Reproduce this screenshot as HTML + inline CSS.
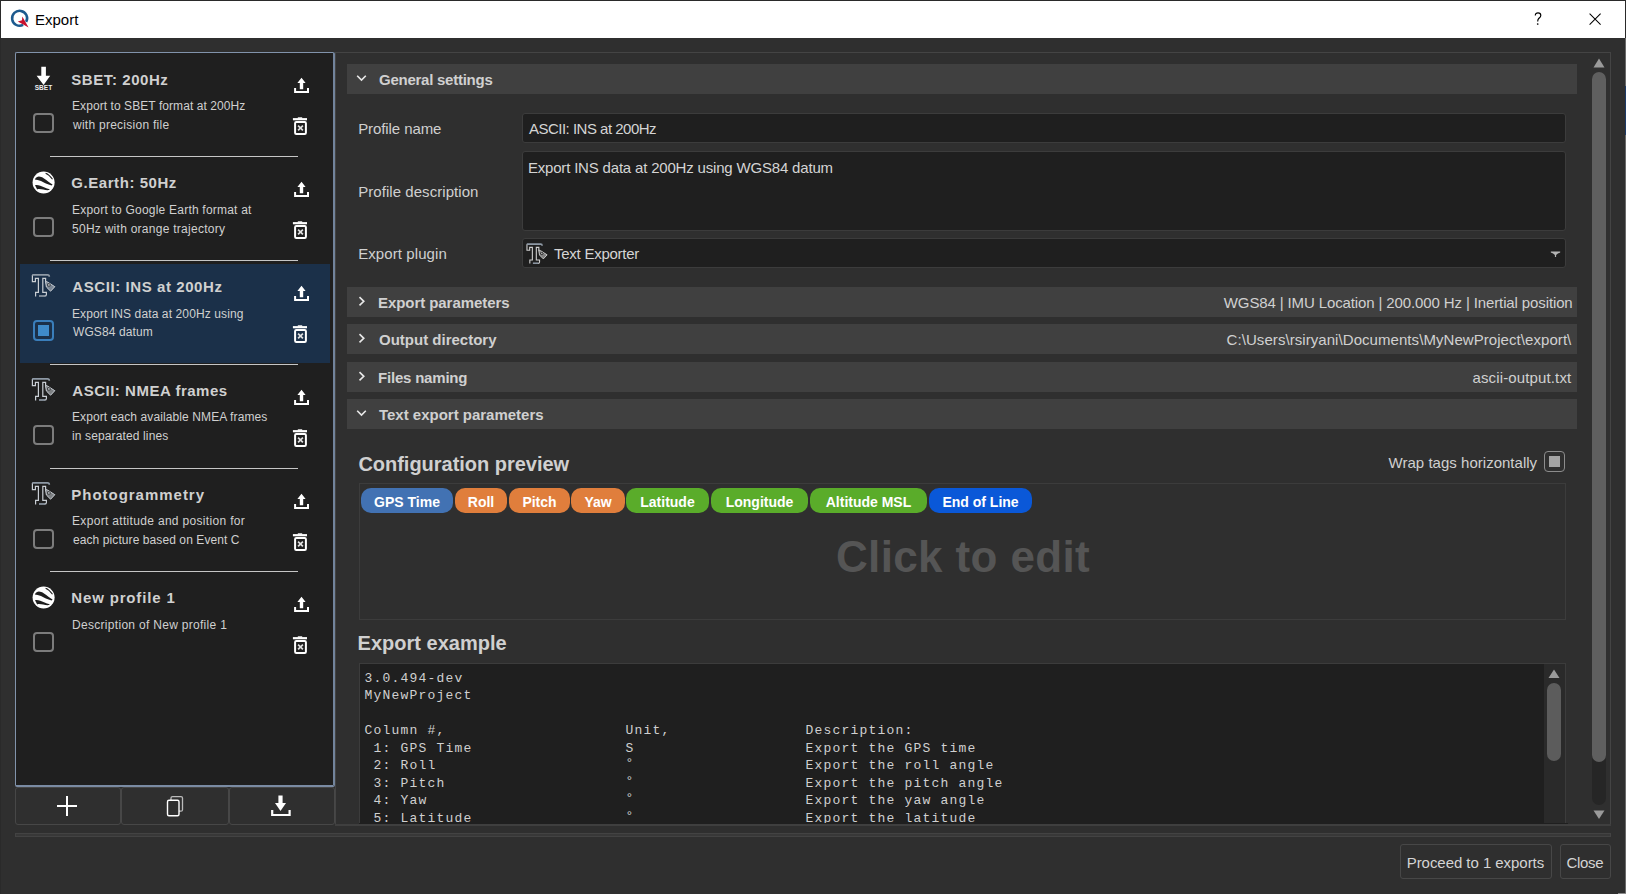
<!DOCTYPE html>
<html><head><meta charset="utf-8"><title>Export</title>
<style>
html,body{margin:0;padding:0;width:1626px;height:894px;overflow:hidden;background:#2f2f2f}
body>div{position:absolute}
</style></head><body>
<div style="left:0px;top:0px;width:1626px;height:894px;background:#2f2f2f"></div>
<div style="left:0px;top:0px;width:1626px;height:1px;background:#2a2a2a"></div>
<div style="left:0px;top:0px;width:1px;height:894px;background:#2a2a2a"></div>
<div style="left:1625px;top:0px;width:1px;height:894px;background:#2a2a2a"></div>
<div style="left:1625px;top:38px;width:1px;height:856px;background:#6a6a6a"></div>
<div style="left:1625px;top:86px;width:1px;height:49px;background:#1d3a66"></div>
<div style="left:1618px;top:893px;width:8px;height:1px;background:#8a8a8a"></div>
<div style="left:1px;top:1px;width:1624px;height:37px;background:#ffffff"></div>
<svg style="position:absolute;left:6px;top:4px" width="28" height="28" viewBox="0 0 28 28"><path d="M17.12,20.92 A7.5,7.5 0 1 1 20.16,17.94" fill="none" stroke="#1d5a8e" stroke-width="2.5"/><path d="M22.6,23.6 L16.3,12.4 L16,16.3 L11.8,17.4 Z" fill="#c8102e"/></svg>
<div style="left:35px;top:12px;font:normal 15px/15px 'Liberation Sans';color:#000000;white-space:pre">Export</div>
<svg style="position:absolute;left:1534px;top:12px" width="8" height="14" viewBox="0 0 8 14"><path d="M1.3,3.4 C1.3,1.8 2.5,0.9 4,0.9 C5.6,0.9 6.8,1.9 6.8,3.4 C6.8,5 5.6,5.6 4.7,6.5 C4,7.2 3.7,8 3.7,9.6" fill="none" stroke="#000" stroke-width="1.15"/><circle cx="3.7" cy="12" r="0.85" fill="#000"/></svg>
<svg style="position:absolute;left:1589px;top:13px" width="13" height="13" viewBox="0 0 13 13"><path d="M0.6,0.6 L11.6,11.6 M11.6,0.6 L0.6,11.6" stroke="#000" stroke-width="1.05"/></svg>
<div style="left:15px;top:52px;width:320px;height:735px;background:#1f1f1f;border:1px solid #8193ab;border-right:2px solid #72849c;border-bottom:2px solid #7a8ba3;box-sizing:border-box;border-radius:2px"></div>
<svg style="position:absolute;left:32px;top:66px" width="24" height="26" viewBox="0 0 24 26"><path d="M9.3,0.8 H13.9 V9.8 H18.2 L11.6,19 L4.6,9.8 H9.3 Z" fill="#fff"/><text x="11.5" y="24.3" text-anchor="middle" font-family="Liberation Sans" font-weight="bold" font-size="6.5" letter-spacing="0.05" fill="#eeeeee">SBET</text></svg>
<div style="left:71.3px;top:72px;font:bold 15px/15px 'Liberation Sans';color:#d0d0d0;letter-spacing:0.57px;white-space:pre">SBET: 200Hz</div>
<div style="left:72px;top:100px;font:normal 12px/12px 'Liberation Sans';color:#d0d0d0;letter-spacing:0.072px;white-space:pre">Export to SBET format at 200Hz</div>
<div style="left:73px;top:119px;font:normal 12px/12px 'Liberation Sans';color:#d0d0d0;letter-spacing:0.261px;white-space:pre">with precision file</div>
<div style="left:33px;top:113px;width:21px;height:20px;border:2px solid #7c7c7c;border-radius:4px;box-sizing:border-box"></div>
<svg style="position:absolute;left:293px;top:77px" width="17" height="18" viewBox="0 0 17 18"><path d="M8.5,0.8 L12.6,5.9 H10.2 V12.2 H6.8 V5.9 H4.4 Z" fill="#fff"/><path d="M2.1,11 V15.1 H15 V11" fill="none" stroke="#fff" stroke-width="2"/></svg>
<svg style="position:absolute;left:292px;top:117px" width="16" height="20" viewBox="0 0 16 20"><path d="M0.9,2.2 H15" stroke="#fff" stroke-width="2.2"/><path d="M5.8,1 H10.2" stroke="#fff" stroke-width="1.4"/><rect x="3.1" y="5" width="10.8" height="12" rx="1.2" fill="none" stroke="#fff" stroke-width="2"/><path d="M6.1,8.6 L10.9,13.4 M10.9,8.6 L6.1,13.4" stroke="#e0e0e0" stroke-width="1.7"/></svg>
<div style="left:50px;top:156px;width:248px;height:1px;background:#c6c6c6"></div>
<svg style="position:absolute;left:30px;top:169px" width="28" height="28" viewBox="0 0 28 28"><circle cx="13.6" cy="13.5" r="11" fill="#fff"/><path d="M4.8,10.4 C7,6.6 10,7 14,9.4 C17,11.4 20,13.8 22.6,15.4 L21.6,16.6 C17.5,15.6 14,13.6 11,12.1 C8.6,10.9 6.6,10.5 4.8,10.4 Z" fill="#1f1f1f"/><path d="M5,16.2 C8,15.6 11,16.9 14,18.3 C16,19.3 18,19.9 19.8,20.3 L19,21.1 C15.5,21.4 12,20.3 9,20.1 C7.6,20.1 7.2,20.6 7.2,20.6 Z" fill="#1f1f1f"/><path d="M15.6,4.3 C18,5.1 20.5,7.5 22.5,10.3" fill="none" stroke="#1f1f1f" stroke-width="1.1"/></svg>
<div style="left:71.3px;top:175px;font:bold 15px/15px 'Liberation Sans';color:#d0d0d0;letter-spacing:0.558px;white-space:pre">G.Earth: 50Hz</div>
<div style="left:72px;top:204px;font:normal 12px/12px 'Liberation Sans';color:#d0d0d0;letter-spacing:0.216px;white-space:pre">Export to Google Earth format at</div>
<div style="left:72px;top:223px;font:normal 12px/12px 'Liberation Sans';color:#d0d0d0;letter-spacing:0.265px;white-space:pre">50Hz with orange trajectory</div>
<div style="left:33px;top:217px;width:21px;height:20px;border:2px solid #7c7c7c;border-radius:4px;box-sizing:border-box"></div>
<svg style="position:absolute;left:293px;top:181px" width="17" height="18" viewBox="0 0 17 18"><path d="M8.5,0.8 L12.6,5.9 H10.2 V12.2 H6.8 V5.9 H4.4 Z" fill="#fff"/><path d="M2.1,11 V15.1 H15 V11" fill="none" stroke="#fff" stroke-width="2"/></svg>
<svg style="position:absolute;left:292px;top:221px" width="16" height="20" viewBox="0 0 16 20"><path d="M0.9,2.2 H15" stroke="#fff" stroke-width="2.2"/><path d="M5.8,1 H10.2" stroke="#fff" stroke-width="1.4"/><rect x="3.1" y="5" width="10.8" height="12" rx="1.2" fill="none" stroke="#fff" stroke-width="2"/><path d="M6.1,8.6 L10.9,13.4 M10.9,8.6 L6.1,13.4" stroke="#e0e0e0" stroke-width="1.7"/></svg>
<div style="left:50px;top:260px;width:248px;height:1px;background:#c6c6c6"></div>
<div style="left:20px;top:264px;width:310px;height:99px;background:#1b3049"></div>
<svg style="position:absolute;left:28px;top:268px" width="32" height="32" viewBox="0 0 32 32"><g transform="scale(1)" fill="none" stroke-width="1.2"><path d="M4.4,7 V13.6 H7.4 V10.4 H10.4 V24.4 H7.6 V28.4" stroke="#c9ced4"/><path d="M16.6,28.2 Q18.4,28.2 18.4,26.6 V24.4 H14.8 V10.4 H17.6 V13.5" stroke="#c9ced4"/><path d="M11,28 H17" stroke="#8e99a5" stroke-width="1.7"/><path d="M4.2,6.8 H19.6 Q21.3,6.8 21.3,8.7" stroke="#8e99a5" stroke-width="1.7"/><path d="M17.4,13.3 L19.6,14.1 L26.8,18.7 L22.6,23.2 L18.4,19 Z" fill="#c9ced4" fill-opacity="0.55" stroke="#c9ced4" stroke-width="1" stroke-linejoin="round"/><circle cx="20.9" cy="16.9" r="1.7" fill="#141414" fill-opacity="0.85" stroke="none"/><circle cx="20.9" cy="16.9" r="0.9" fill="#c9ced4" stroke="none"/></g></svg>
<div style="left:72.3px;top:279px;font:bold 15px/15px 'Liberation Sans';color:#d0d0d0;letter-spacing:0.578px;white-space:pre">ASCII: INS at 200Hz</div>
<div style="left:72px;top:308px;font:normal 12px/12px 'Liberation Sans';color:#d0d0d0;letter-spacing:0.114px;white-space:pre">Export INS data at 200Hz using</div>
<div style="left:73px;top:326px;font:normal 12px/12px 'Liberation Sans';color:#d0d0d0;letter-spacing:0.1px;white-space:pre">WGS84 datum</div>
<div style="left:33px;top:320px;width:21px;height:21px;border:2px solid #3a7ebb;border-radius:4px;box-sizing:border-box"></div>
<div style="left:38px;top:325px;width:11px;height:11px;background:#3f8bca"></div>
<svg style="position:absolute;left:293px;top:285px" width="17" height="18" viewBox="0 0 17 18"><path d="M8.5,0.8 L12.6,5.9 H10.2 V12.2 H6.8 V5.9 H4.4 Z" fill="#fff"/><path d="M2.1,11 V15.1 H15 V11" fill="none" stroke="#fff" stroke-width="2"/></svg>
<svg style="position:absolute;left:292px;top:325px" width="16" height="20" viewBox="0 0 16 20"><path d="M0.9,2.2 H15" stroke="#fff" stroke-width="2.2"/><path d="M5.8,1 H10.2" stroke="#fff" stroke-width="1.4"/><rect x="3.1" y="5" width="10.8" height="12" rx="1.2" fill="none" stroke="#fff" stroke-width="2"/><path d="M6.1,8.6 L10.9,13.4 M10.9,8.6 L6.1,13.4" stroke="#e0e0e0" stroke-width="1.7"/></svg>
<div style="left:50px;top:364px;width:248px;height:1px;background:#c6c6c6"></div>
<svg style="position:absolute;left:28px;top:372px" width="32" height="32" viewBox="0 0 32 32"><g transform="scale(1)" fill="none" stroke-width="1.2"><path d="M4.4,7 V13.6 H7.4 V10.4 H10.4 V24.4 H7.6 V28.4" stroke="#c9ced4"/><path d="M16.6,28.2 Q18.4,28.2 18.4,26.6 V24.4 H14.8 V10.4 H17.6 V13.5" stroke="#c9ced4"/><path d="M11,28 H17" stroke="#8e99a5" stroke-width="1.7"/><path d="M4.2,6.8 H19.6 Q21.3,6.8 21.3,8.7" stroke="#8e99a5" stroke-width="1.7"/><path d="M17.4,13.3 L19.6,14.1 L26.8,18.7 L22.6,23.2 L18.4,19 Z" fill="#c9ced4" fill-opacity="0.55" stroke="#c9ced4" stroke-width="1" stroke-linejoin="round"/><circle cx="20.9" cy="16.9" r="1.7" fill="#141414" fill-opacity="0.85" stroke="none"/><circle cx="20.9" cy="16.9" r="0.9" fill="#c9ced4" stroke="none"/></g></svg>
<div style="left:72.3px;top:383px;font:bold 15px/15px 'Liberation Sans';color:#d0d0d0;letter-spacing:0.512px;white-space:pre">ASCII: NMEA frames</div>
<div style="left:72px;top:411px;font:normal 12px/12px 'Liberation Sans';color:#d0d0d0;letter-spacing:0.1px;white-space:pre">Export each available NMEA frames</div>
<div style="left:72px;top:430px;font:normal 12px/12px 'Liberation Sans';color:#d0d0d0;letter-spacing:0.129px;white-space:pre">in separated lines</div>
<div style="left:33px;top:425px;width:21px;height:20px;border:2px solid #7c7c7c;border-radius:4px;box-sizing:border-box"></div>
<svg style="position:absolute;left:293px;top:389px" width="17" height="18" viewBox="0 0 17 18"><path d="M8.5,0.8 L12.6,5.9 H10.2 V12.2 H6.8 V5.9 H4.4 Z" fill="#fff"/><path d="M2.1,11 V15.1 H15 V11" fill="none" stroke="#fff" stroke-width="2"/></svg>
<svg style="position:absolute;left:292px;top:429px" width="16" height="20" viewBox="0 0 16 20"><path d="M0.9,2.2 H15" stroke="#fff" stroke-width="2.2"/><path d="M5.8,1 H10.2" stroke="#fff" stroke-width="1.4"/><rect x="3.1" y="5" width="10.8" height="12" rx="1.2" fill="none" stroke="#fff" stroke-width="2"/><path d="M6.1,8.6 L10.9,13.4 M10.9,8.6 L6.1,13.4" stroke="#e0e0e0" stroke-width="1.7"/></svg>
<div style="left:50px;top:468px;width:248px;height:1px;background:#c6c6c6"></div>
<svg style="position:absolute;left:28px;top:476px" width="32" height="32" viewBox="0 0 32 32"><g transform="scale(1)" fill="none" stroke-width="1.2"><path d="M4.4,7 V13.6 H7.4 V10.4 H10.4 V24.4 H7.6 V28.4" stroke="#c9ced4"/><path d="M16.6,28.2 Q18.4,28.2 18.4,26.6 V24.4 H14.8 V10.4 H17.6 V13.5" stroke="#c9ced4"/><path d="M11,28 H17" stroke="#8e99a5" stroke-width="1.7"/><path d="M4.2,6.8 H19.6 Q21.3,6.8 21.3,8.7" stroke="#8e99a5" stroke-width="1.7"/><path d="M17.4,13.3 L19.6,14.1 L26.8,18.7 L22.6,23.2 L18.4,19 Z" fill="#c9ced4" fill-opacity="0.55" stroke="#c9ced4" stroke-width="1" stroke-linejoin="round"/><circle cx="20.9" cy="16.9" r="1.7" fill="#141414" fill-opacity="0.85" stroke="none"/><circle cx="20.9" cy="16.9" r="0.9" fill="#c9ced4" stroke="none"/></g></svg>
<div style="left:71.3px;top:487px;font:bold 15px/15px 'Liberation Sans';color:#d0d0d0;letter-spacing:0.977px;white-space:pre">Photogrammetry</div>
<div style="left:72px;top:515px;font:normal 12px/12px 'Liberation Sans';color:#d0d0d0;letter-spacing:0.323px;white-space:pre">Export attitude and position for</div>
<div style="left:73px;top:534px;font:normal 12px/12px 'Liberation Sans';color:#d0d0d0;letter-spacing:0.086px;white-space:pre">each picture based on Event C</div>
<div style="left:33px;top:529px;width:21px;height:20px;border:2px solid #7c7c7c;border-radius:4px;box-sizing:border-box"></div>
<svg style="position:absolute;left:293px;top:493px" width="17" height="18" viewBox="0 0 17 18"><path d="M8.5,0.8 L12.6,5.9 H10.2 V12.2 H6.8 V5.9 H4.4 Z" fill="#fff"/><path d="M2.1,11 V15.1 H15 V11" fill="none" stroke="#fff" stroke-width="2"/></svg>
<svg style="position:absolute;left:292px;top:533px" width="16" height="20" viewBox="0 0 16 20"><path d="M0.9,2.2 H15" stroke="#fff" stroke-width="2.2"/><path d="M5.8,1 H10.2" stroke="#fff" stroke-width="1.4"/><rect x="3.1" y="5" width="10.8" height="12" rx="1.2" fill="none" stroke="#fff" stroke-width="2"/><path d="M6.1,8.6 L10.9,13.4 M10.9,8.6 L6.1,13.4" stroke="#e0e0e0" stroke-width="1.7"/></svg>
<div style="left:50px;top:571px;width:248px;height:1px;background:#c6c6c6"></div>
<svg style="position:absolute;left:30px;top:584px" width="28" height="28" viewBox="0 0 28 28"><circle cx="13.6" cy="13.5" r="11" fill="#fff"/><path d="M4.8,10.4 C7,6.6 10,7 14,9.4 C17,11.4 20,13.8 22.6,15.4 L21.6,16.6 C17.5,15.6 14,13.6 11,12.1 C8.6,10.9 6.6,10.5 4.8,10.4 Z" fill="#1f1f1f"/><path d="M5,16.2 C8,15.6 11,16.9 14,18.3 C16,19.3 18,19.9 19.8,20.3 L19,21.1 C15.5,21.4 12,20.3 9,20.1 C7.6,20.1 7.2,20.6 7.2,20.6 Z" fill="#1f1f1f"/><path d="M15.6,4.3 C18,5.1 20.5,7.5 22.5,10.3" fill="none" stroke="#1f1f1f" stroke-width="1.1"/></svg>
<div style="left:71.3px;top:590px;font:bold 15px/15px 'Liberation Sans';color:#d0d0d0;letter-spacing:0.842px;white-space:pre">New profile 1</div>
<div style="left:72px;top:619px;font:normal 12px/12px 'Liberation Sans';color:#d0d0d0;letter-spacing:0.3px;white-space:pre">Description of New profile 1</div>
<div style="left:33px;top:632px;width:21px;height:20px;border:2px solid #7c7c7c;border-radius:4px;box-sizing:border-box"></div>
<svg style="position:absolute;left:293px;top:596px" width="17" height="18" viewBox="0 0 17 18"><path d="M8.5,0.8 L12.6,5.9 H10.2 V12.2 H6.8 V5.9 H4.4 Z" fill="#fff"/><path d="M2.1,11 V15.1 H15 V11" fill="none" stroke="#fff" stroke-width="2"/></svg>
<svg style="position:absolute;left:292px;top:636px" width="16" height="20" viewBox="0 0 16 20"><path d="M0.9,2.2 H15" stroke="#fff" stroke-width="2.2"/><path d="M5.8,1 H10.2" stroke="#fff" stroke-width="1.4"/><rect x="3.1" y="5" width="10.8" height="12" rx="1.2" fill="none" stroke="#fff" stroke-width="2"/><path d="M6.1,8.6 L10.9,13.4 M10.9,8.6 L6.1,13.4" stroke="#e0e0e0" stroke-width="1.7"/></svg>
<div style="left:15px;top:787px;width:106px;height:38px;border:1px solid #474747;border-radius:3px;box-sizing:border-box"></div>
<div style="left:121px;top:787px;width:108px;height:38px;border:1px solid #474747;border-radius:3px;box-sizing:border-box"></div>
<div style="left:229px;top:787px;width:106px;height:38px;border:1px solid #474747;border-radius:3px;box-sizing:border-box"></div>
<svg style="position:absolute;left:56px;top:795px" width="22" height="22" viewBox="0 0 22 22"><path d="M11,1 V21 M1,11 H21" stroke="#fff" stroke-width="2"/></svg>
<svg style="position:absolute;left:165px;top:794px" width="20" height="24" viewBox="0 0 20 24"><rect x="6" y="2.6" width="11.5" height="14.6" rx="1.5" fill="none" stroke="#bbb" stroke-width="1.3"/><rect x="2.5" y="6.3" width="11.5" height="15.4" rx="1.5" fill="#2f2f2f" stroke="#fff" stroke-width="1.4"/></svg>
<svg style="position:absolute;left:270px;top:795px" width="22" height="22" viewBox="0 0 22 22"><path d="M8.4,0.6 H12.6 V8 H16 L10.5,16 L5,8 H8.4 Z" fill="#fff"/><path d="M2.2,15 V20 H19.6 V15" fill="none" stroke="#fff" stroke-width="2.2"/></svg>
<div style="left:335px;top:52px;width:1276px;height:773px;border:1px solid #444;box-sizing:border-box"></div>
<div style="left:347px;top:64px;width:1230px;height:30px;background:#404040"></div>
<svg style="position:absolute;left:355px;top:74px" width="12" height="8" viewBox="0 0 12 8"><path d="M2.2,1.8 L6.5,6.1 L10.8,1.8" fill="none" stroke="#e8e8e8" stroke-width="1.6"/></svg>
<div style="left:379px;top:72px;font:bold 15px/15px 'Liberation Sans';color:#d0d0d0;letter-spacing:-0.253px;white-space:pre">General settings</div>
<div style="left:358.2px;top:121px;font:normal 15px/15px 'Liberation Sans';color:#d0d0d0;letter-spacing:-0.091px;white-space:pre">Profile name</div>
<div style="left:358.2px;top:184px;font:normal 15px/15px 'Liberation Sans';color:#d0d0d0;letter-spacing:0.056px;white-space:pre">Profile description</div>
<div style="left:358.2px;top:246px;font:normal 15px/15px 'Liberation Sans';color:#d0d0d0;letter-spacing:0.083px;white-space:pre">Export plugin</div>
<div style="left:522px;top:113px;width:1044px;height:30px;background:#1f1f1f;border:1px solid #3c3c3c;border-radius:3px;box-sizing:border-box"></div>
<div style="left:528.9px;top:121px;font:normal 15px/15px 'Liberation Sans';color:#d4d4d4;letter-spacing:-0.5px;white-space:pre">ASCII: INS at 200Hz</div>
<div style="left:522px;top:151px;width:1044px;height:80px;background:#1f1f1f;border:1px solid #3c3c3c;border-radius:3px;box-sizing:border-box"></div>
<div style="left:527.9px;top:160px;font:normal 15px/15px 'Liberation Sans';color:#d4d4d4;letter-spacing:-0.183px;white-space:pre">Export INS data at 200Hz using WGS84 datum</div>
<div style="left:522px;top:238px;width:1044px;height:30px;background:#1f1f1f;border:1px solid #3c3c3c;border-radius:3px;box-sizing:border-box"></div>
<svg style="position:absolute;left:522.6px;top:237.8px" width="32" height="32" viewBox="0 0 32 32"><g transform="scale(0.9)" fill="none" stroke-width="1.2"><path d="M4.4,7 V13.6 H7.4 V10.4 H10.4 V24.4 H7.6 V28.4" stroke="#d0d0d0"/><path d="M16.6,28.2 Q18.4,28.2 18.4,26.6 V24.4 H14.8 V10.4 H17.6 V13.5" stroke="#d0d0d0"/><path d="M11,28 H17" stroke="#8e99a5" stroke-width="1.7"/><path d="M4.2,6.8 H19.6 Q21.3,6.8 21.3,8.7" stroke="#8e99a5" stroke-width="1.7"/><path d="M17.4,13.3 L19.6,14.1 L26.8,18.7 L22.6,23.2 L18.4,19 Z" fill="#d0d0d0" fill-opacity="0.55" stroke="#d0d0d0" stroke-width="1" stroke-linejoin="round"/><circle cx="20.9" cy="16.9" r="1.7" fill="#141414" fill-opacity="0.85" stroke="none"/><circle cx="20.9" cy="16.9" r="0.9" fill="#d0d0d0" stroke="none"/></g></svg>
<div style="left:554px;top:246px;font:normal 15px/15px 'Liberation Sans';color:#d4d4d4;letter-spacing:-0.25px;white-space:pre">Text Exporter</div>
<svg style="position:absolute;left:1550px;top:250.6px" width="12" height="8" viewBox="0 0 12 8"><path d="M0.8,0.6 H10.2 V1.6 Q7.6,2.3 6.1,3.9 V6.1 H4.9 V3.9 Q3.4,2.3 0.8,1.6 Z" fill="#b4b4b4"/></svg>
<div style="left:347px;top:287px;width:1230px;height:30px;background:#404040"></div>
<svg style="position:absolute;left:357px;top:295px" width="8" height="12" viewBox="0 0 8 12"><path d="M2.5,2.2 L6.8,6.3 L2.5,10.4" fill="none" stroke="#e8e8e8" stroke-width="1.6"/></svg>
<div style="left:378px;top:295px;font:bold 15px/15px 'Liberation Sans';color:#d0d0d0;letter-spacing:-0.062px;white-space:pre">Export parameters</div>
<div style="right:53.421px;top:295px;font:normal 15px/15px 'Liberation Sans';color:#d0d0d0;letter-spacing:-0.121px;white-space:pre">WGS84 | IMU Location | 200.000 Hz | Inertial position</div>
<div style="left:347px;top:324px;width:1230px;height:30px;background:#404040"></div>
<svg style="position:absolute;left:357px;top:332px" width="8" height="12" viewBox="0 0 8 12"><path d="M2.5,2.2 L6.8,6.3 L2.5,10.4" fill="none" stroke="#e8e8e8" stroke-width="1.6"/></svg>
<div style="left:379px;top:332px;font:bold 15px/15px 'Liberation Sans';color:#d0d0d0;white-space:pre">Output directory</div>
<div style="right:54.668px;top:332px;font:normal 15px/15px 'Liberation Sans';color:#d0d0d0;letter-spacing:0.062px;white-space:pre">C:\Users\rsiryani\Documents\MyNewProject\export\</div>
<div style="left:347px;top:362px;width:1230px;height:30px;background:#404040"></div>
<svg style="position:absolute;left:357px;top:370px" width="8" height="12" viewBox="0 0 8 12"><path d="M2.5,2.2 L6.8,6.3 L2.5,10.4" fill="none" stroke="#e8e8e8" stroke-width="1.6"/></svg>
<div style="left:378px;top:370px;font:bold 15px/15px 'Liberation Sans';color:#d0d0d0;letter-spacing:-0.2px;white-space:pre">Files naming</div>
<div style="right:54.647px;top:370px;font:normal 15px/15px 'Liberation Sans';color:#d0d0d0;letter-spacing:0.133px;white-space:pre">ascii-output.txt</div>
<div style="left:347px;top:399px;width:1230px;height:30px;background:#404040"></div>
<svg style="position:absolute;left:355px;top:409px" width="12" height="8" viewBox="0 0 12 8"><path d="M2.2,1.8 L6.5,6.1 L10.8,1.8" fill="none" stroke="#e8e8e8" stroke-width="1.6"/></svg>
<div style="left:379px;top:407px;font:bold 15px/15px 'Liberation Sans';color:#d0d0d0;letter-spacing:-0.01px;white-space:pre">Text export parameters</div>
<div style="left:358.4px;top:454px;font:bold 20px/20px 'Liberation Sans';color:#d0d0d0;letter-spacing:-0.02px;white-space:pre">Configuration preview</div>
<div style="right:88.86099999999999px;top:455px;font:normal 15px/15px 'Liberation Sans';color:#d0d0d0;letter-spacing:0.019px;white-space:pre">Wrap tags horizontally</div>
<div style="left:1544px;top:451px;width:21px;height:21px;border:1.6px solid #8c8c8c;border-radius:4px;box-sizing:border-box"></div>
<div style="left:1549px;top:456px;width:11px;height:11px;background:#a4a4a4"></div>
<div style="left:359px;top:483px;width:1207px;height:137px;border:1px solid #3c3c3c;box-sizing:border-box"></div>
<div style="left:361px;top:488px;width:92px;height:25px;background:#4272b3;border-radius:10px;font:bold 14px/29px 'Liberation Sans';color:#fff;text-align:center;white-space:pre">GPS Time</div>
<div style="left:455px;top:488px;width:52px;height:25px;background:#e07e3c;border-radius:10px;font:bold 14px/29px 'Liberation Sans';color:#fff;text-align:center;white-space:pre">Roll</div>
<div style="left:509px;top:488px;width:61px;height:25px;background:#e07e3c;border-radius:10px;font:bold 14px/29px 'Liberation Sans';color:#fff;text-align:center;white-space:pre">Pitch</div>
<div style="left:571px;top:488px;width:54px;height:25px;background:#e07e3c;border-radius:10px;font:bold 14px/29px 'Liberation Sans';color:#fff;text-align:center;white-space:pre">Yaw</div>
<div style="left:626px;top:488px;width:83px;height:25px;background:#5aac2a;border-radius:10px;font:bold 14px/29px 'Liberation Sans';color:#fff;text-align:center;white-space:pre">Latitude</div>
<div style="left:711px;top:488px;width:97px;height:25px;background:#5aac2a;border-radius:10px;font:bold 14px/29px 'Liberation Sans';color:#fff;text-align:center;white-space:pre">Longitude</div>
<div style="left:810px;top:488px;width:117px;height:25px;background:#5aac2a;border-radius:10px;font:bold 14px/29px 'Liberation Sans';color:#fff;text-align:center;white-space:pre">Altitude MSL</div>
<div style="left:929px;top:488px;width:103px;height:25px;background:#0a58d8;border-radius:10px;font:bold 14px/29px 'Liberation Sans';color:#fff;text-align:center;white-space:pre">End of Line</div>
<div style="left:835.9px;top:535px;font:bold 44px/44px 'Liberation Sans';color:#555555;letter-spacing:0.375px;white-space:pre">Click to edit</div>
<div style="left:357.6px;top:633px;font:bold 20px/20px 'Liberation Sans';color:#d0d0d0;letter-spacing:0.008px;white-space:pre">Export example</div>
<div style="left:359px;top:663px;width:1207px;height:162px;background:#1f1f1f;border:1px solid #3c3c3c;border-bottom:none;box-sizing:border-box"></div>
<div style="left:364.5px;top:672px;font:13px/13px 'Liberation Mono';letter-spacing:1.200px;color:#d0d0d0;white-space:pre">3.0.494-dev</div>
<div style="left:364.5px;top:689px;font:13px/13px 'Liberation Mono';letter-spacing:1.200px;color:#d0d0d0;white-space:pre">MyNewProject</div>
<div style="left:364.5px;top:724px;font:13px/13px 'Liberation Mono';letter-spacing:1.200px;color:#d0d0d0;white-space:pre">Column #,                    Unit,               Description:</div>
<div style="left:364.5px;top:742px;font:13px/13px 'Liberation Mono';letter-spacing:1.200px;color:#d0d0d0;white-space:pre"> 1: GPS Time                 S                   Export the GPS time</div>
<div style="left:364.5px;top:759px;font:13px/13px 'Liberation Mono';letter-spacing:1.200px;color:#d0d0d0;white-space:pre"> 2: Roll                     <span style="position:relative;top:-2px">°</span>                   Export the roll angle</div>
<div style="left:364.5px;top:777px;font:13px/13px 'Liberation Mono';letter-spacing:1.200px;color:#d0d0d0;white-space:pre"> 3: Pitch                    <span style="position:relative;top:-2px">°</span>                   Export the pitch angle</div>
<div style="left:364.5px;top:794px;font:13px/13px 'Liberation Mono';letter-spacing:1.200px;color:#d0d0d0;white-space:pre"> 4: Yaw                      <span style="position:relative;top:-2px">°</span>                   Export the yaw angle</div>
<div style="left:364.5px;top:812px;font:13px/13px 'Liberation Mono';letter-spacing:1.200px;color:#d0d0d0;white-space:pre"> 5: Latitude                 <span style="position:relative;top:-2px">°</span>                   Export the latitude</div>
<div style="left:1544px;top:664px;width:21px;height:161px;background:#2a2a2a"></div>
<svg style="position:absolute;left:1547px;top:668px" width="14" height="12" viewBox="0 0 14 12"><path d="M1.5,10 L12.5,10 L7,1.5 Z" fill="#9a9a9a"/></svg>
<div style="left:1547px;top:683px;width:14px;height:78px;background:#5c5c5c;border-radius:7px"></div>
<svg style="position:absolute;left:1592px;top:57px" width="14" height="12" viewBox="0 0 14 12"><path d="M1.5,10.5 L12.5,10.5 L7,1.5 Z" fill="#9a9a9a"/></svg>
<div style="left:1592px;top:72px;width:14px;height:733px;background:#262626;border-radius:7px"></div>
<div style="left:1592px;top:72px;width:14px;height:690px;background:#5f5f5f;border-radius:7px"></div>
<svg style="position:absolute;left:1592px;top:809px" width="14" height="12" viewBox="0 0 14 12"><path d="M1.5,1.5 L12.5,1.5 L7,10 Z" fill="#9a9a9a"/></svg>
<div style="left:335px;top:823px;width:1276px;height:1px;background:#1f1f1f;width:1209px;left:359px"></div>
<div style="left:335px;top:824px;width:1276px;height:2px;background:#3f3f3f"></div>
<div style="left:15px;top:833px;width:1596px;height:4px;border:1px solid #434343;box-sizing:border-box;background:#383838"></div>
<div style="left:1400px;top:844px;width:152px;height:35px;border:1px solid #474747;border-radius:3px;box-sizing:border-box"></div>
<div style="left:1406.7px;top:855px;font:normal 15px/15px 'Liberation Sans';color:#d4d4d4;letter-spacing:-0.047px;white-space:pre">Proceed to 1 exports</div>
<div style="left:1560px;top:844px;width:51px;height:35px;border:1px solid #474747;border-radius:3px;box-sizing:border-box"></div>
<div style="left:1566.5px;top:855px;font:normal 15px/15px 'Liberation Sans';color:#d4d4d4;letter-spacing:-0.3px;white-space:pre">Close</div>
</body></html>
